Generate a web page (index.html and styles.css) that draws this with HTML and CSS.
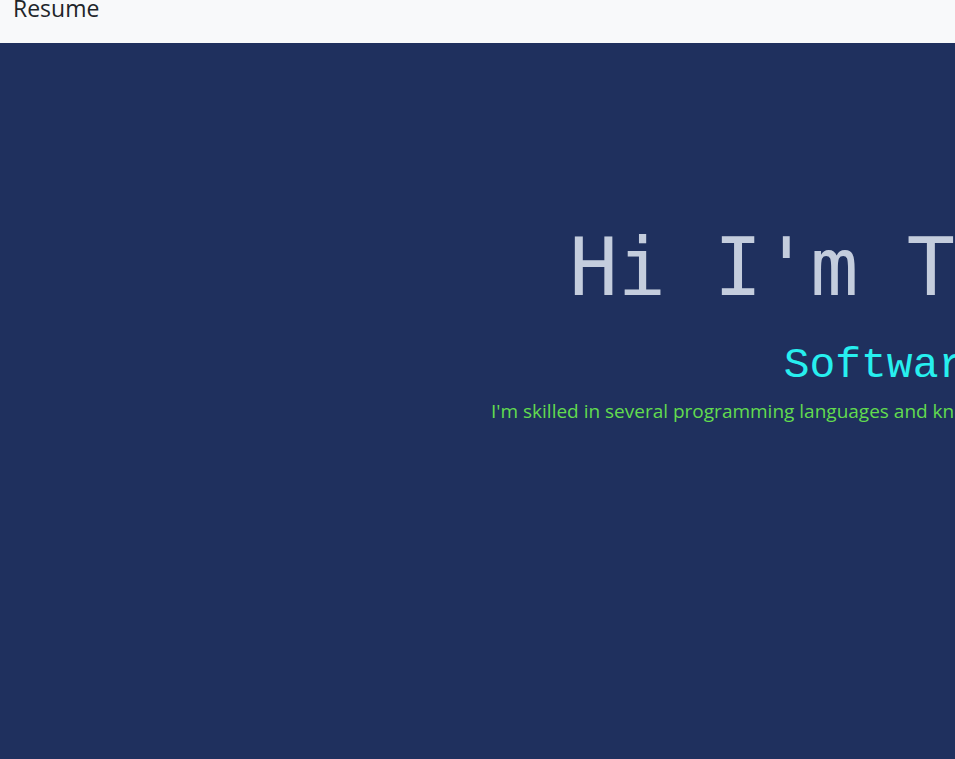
FILE: index.html
```html
<!DOCTYPE html>
<html lang="en">
<head>
<meta charset="utf-8">
<title>Resume</title>
<link rel="stylesheet" href="styles.css">
</head>
<body>
<nav class="navbar">
  <a class="brand" href="#">Resume</a>
</nav>
<main class="hero">
  <div class="hero-inner">
    <h1 class="hero-title">Hi I'm Tyler Brown</h1>
    <h2 class="hero-role">Software Engineer</h2>
    <p class="hero-text">I'm skilled in several programming languages and know how to build modern, responsive full stack web applications.</p>
  </div>
</main>
</body>
</html>
```
FILE: styles.css
```css
html, body {
  margin: 0;
  padding: 0;
}
body {
  background: #1f305e;
  overflow: hidden;
  height: 759px;
  font-family: "Open Sans", "Noto Sans", sans-serif;
}
.navbar {
  background: #f8f9fa;
  height: 43px;
  box-sizing: border-box;
  padding: 0 13px;
}
.brand {
  display: block;
  color: #212529;
  text-decoration: none;
  font-size: 23px;
  line-height: 16px;
}
.hero {
  display: flex;
  background: #1f305e;
  padding-top: 185px;
}
.hero-inner {
  flex: none;
  width: 2006px;
  text-align: center;
  white-space: nowrap;
}
.hero-title {
  margin: 0;
  font-family: "DejaVu Sans Mono", monospace;
  font-weight: normal;
  font-size: 80px;
  line-height: 80px;
  color: #c4cddd;
}
.hero-role {
  margin: 36px 0 0;
  font-family: "Liberation Mono", monospace;
  font-weight: normal;
  font-size: 43px;
  line-height: 43px;
  color: #27efef;
}
.hero-text {
  width: 1024px;
  margin: 12px auto 0;
  text-align: left;
  font-size: 19px;
  line-height: 25px;
  color: #62dc4f;
}
```
